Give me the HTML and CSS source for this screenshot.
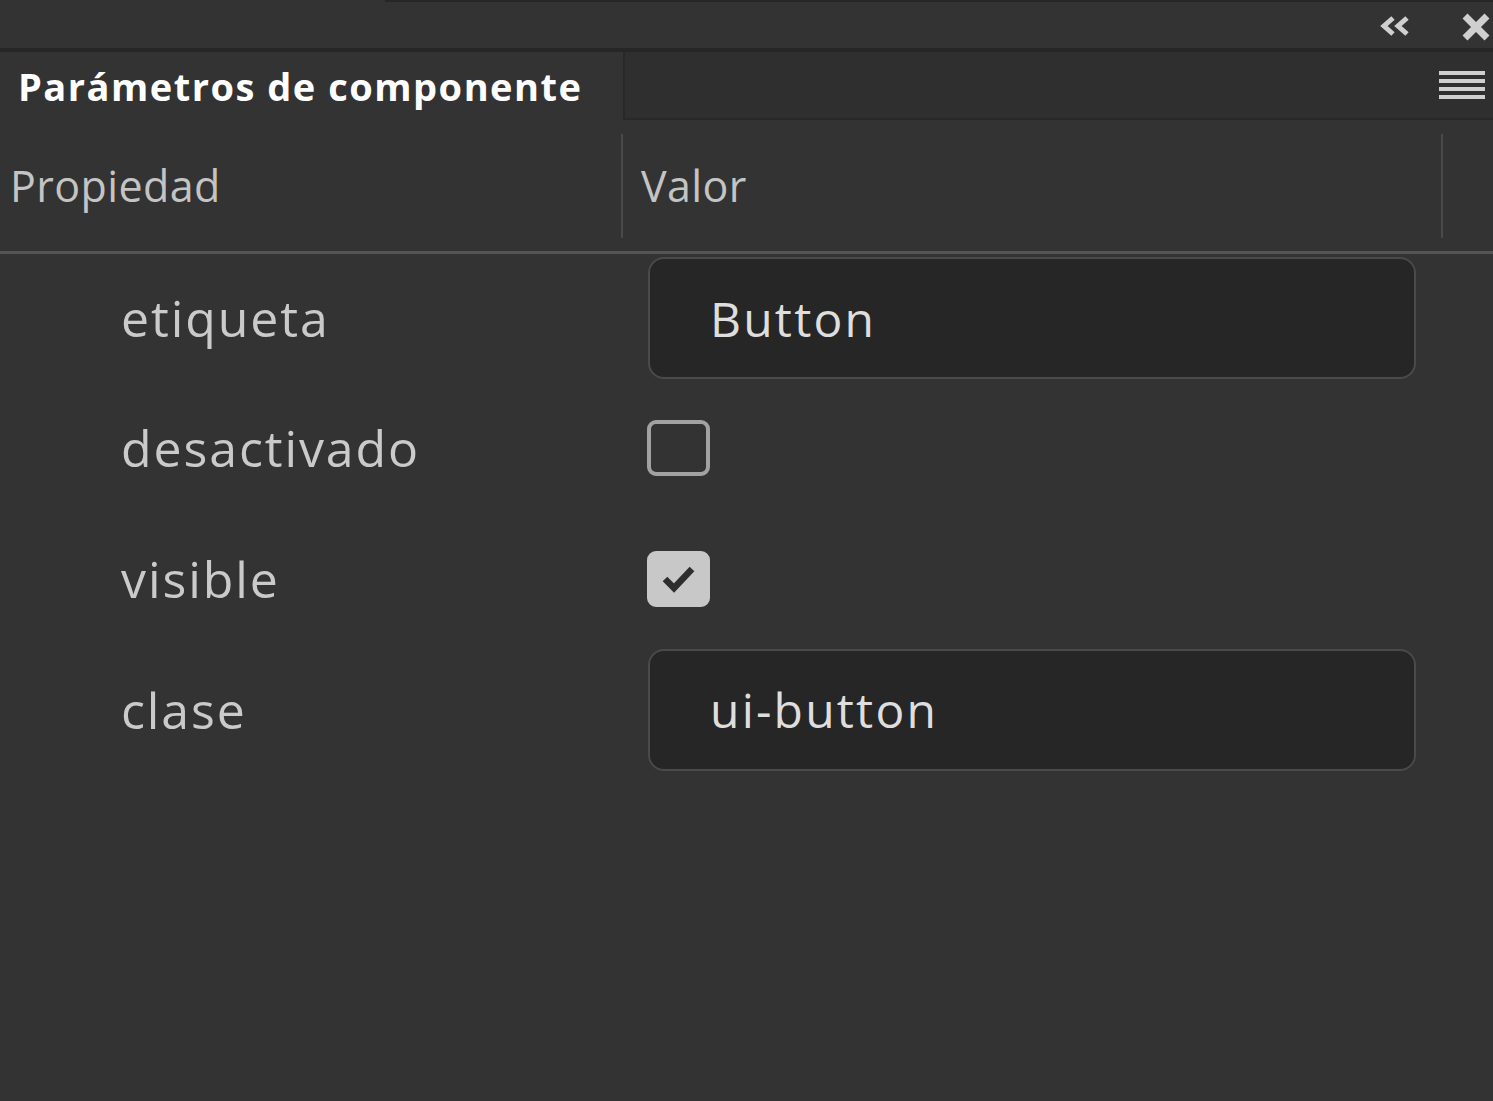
FILE: index.html
```html
<!DOCTYPE html>
<html lang="es">
<head>
  <meta charset="UTF-8">
  <title>Parámetros de componente</title>
  <link rel="stylesheet" href="styles.css">
</head>
<body>
  <div class="titlebar">
    <span class="collapse">
      <svg width="34" height="22" viewBox="0 0 34 22"><path d="M14 3 L5 11 L14 19 M28 3 L19 11 L28 19" fill="none" stroke="#cfcfcf" stroke-width="5"/></svg>
    </span>
    <span class="close">
      <svg width="30" height="28" viewBox="0 0 30 28"><path d="M4 3 L26 25 M26 3 L4 25" stroke="#cfcfcf" stroke-width="7"/></svg>
    </span>
  </div>
  <div class="tabs">
    <div class="tab">Parámetros de componente</div>
    <div class="tab-rest">
      <span class="menu">
        <svg width="46" height="30" viewBox="0 0 46 30"><path d="M0 3 H46 M0 11 H46 M0 19 H46 M0 27 H46" stroke="#cfcfcf" stroke-width="4"/></svg>
      </span>
    </div>
  </div>
  <div class="grid-head">
    <div class="col col-prop">Propiedad</div>
    <div class="col col-val">Valor</div>
    <div class="col col-end"></div>
  </div>
  <div class="rows">
    <div class="row">
      <div class="label">etiqueta</div>
      <div class="value"><div class="field">Button</div></div>
    </div>
    <div class="row">
      <div class="label">desactivado</div>
      <div class="value"><div class="check"></div></div>
    </div>
    <div class="row">
      <div class="label">visible</div>
      <div class="value">
        <div class="check checked">
          <svg width="40" height="32" viewBox="0 0 40 32"><path d="M6 16 L15 25 L33 6" fill="none" stroke="#2e2e2e" stroke-width="6.5"/></svg>
        </div>
      </div>
    </div>
    <div class="row">
      <div class="label">clase</div>
      <div class="value"><div class="field">ui-button</div></div>
    </div>
  </div>
</body>
</html>
```

FILE: styles.css
```css
body {
  margin: 0;
  background-color: #333333;
  color: #c9c9c9;
  font-family: "Open Sans", "Noto Sans", sans-serif;
  height: 1101px;
  overflow: hidden;
}
.titlebar {
  height: 48px;
  display: flex;
  justify-content: flex-end;
  align-items: center;
  background-color: #333333;
  border-bottom: 4px solid #262626;
  background-image: linear-gradient(to right, transparent 385px, #262626 385px);
  background-size: 100% 2px;
  background-repeat: no-repeat;
}
.titlebar .collapse {
  display: flex;
  margin-right: 48px;
  margin-top: 4px;
}
.titlebar .close {
  display: flex;
  margin-right: 2px;
  margin-top: 6px;
}
.tabs {
  display: flex;
  height: 68px;
}
.tab {
  width: 605px;
  padding-left: 18px;
  color: #ffffff;
  font-weight: bold;
  font-size: 38px;
  line-height: 68px;
  letter-spacing: 1.5px;
  white-space: nowrap;
  background-color: #333333;
}
.tab-rest {
  flex: 1;
  display: flex;
  justify-content: flex-end;
  align-items: center;
  background-color: #2f2f2f;
  border-left: 2px solid #282828;
  border-bottom: 2px solid #282828;
}
.menu {
  display: flex;
  margin-right: 8px;
}
.grid-head {
  display: flex;
  height: 131px;
  border-bottom: 3px solid #555555;
  align-items: center;
  font-size: 43px;
  letter-spacing: 0.4px;
  color: #c4c4c4;
}
.col {
  height: 104px;
  display: flex;
  align-items: center;
}
.col-prop {
  width: 611px;
  padding-left: 10px;
  border-right: 2px solid #4a4a4a;
}
.col-val {
  width: 800px;
  padding-left: 18px;
  border-right: 2px solid #4a4a4a;
}
.rows {
  display: flex;
  flex-direction: column;
}
.row {
  display: flex;
  align-items: center;
  height: 131px;
}
.row:first-child {
  height: 128px;
}
.label {
  width: 527px;
  padding-left: 121px;
  font-size: 50px;
  letter-spacing: 1.9px;
  color: #cacaca;
}
.value {
  flex: 1;
}
.field {
  width: 704px;
  height: 118px;
  padding-left: 60px;
  display: flex;
  align-items: center;
  border: 2px solid #4a4a4a;
  border-radius: 16px;
  background-color: #262626;
  color: #dedede;
  font-size: 48px;
  letter-spacing: 2.2px;
}
.check {
  width: 55px;
  height: 48px;
  border: 4px solid #a2a2a2;
  border-radius: 9px;
  background-color: #333333;
  margin-left: -1px;
  display: flex;
  align-items: center;
  justify-content: center;
}
.check.checked {
  background-color: #c8c8c8;
  border-color: #c8c8c8;
}
```
